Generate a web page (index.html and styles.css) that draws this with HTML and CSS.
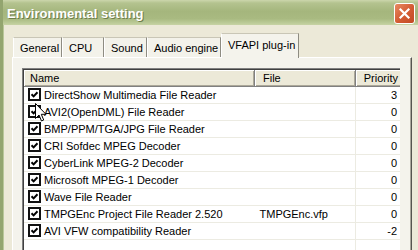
FILE: index.html
```html
<!DOCTYPE html>
<html>
<head>
    <title>Environmental setting</title>
    <link rel="stylesheet" href="styles.css">
</head>
<body>
    <div class="window">
        <div class="titlebar">
            <span class="title">Environmental setting</span>
            <div class="close-btn">
                <svg width="19" height="19" viewBox="0 0 19 19">
                    <path d="M5.5 5.5 L13.5 13.5 M13.5 5.5 L5.5 13.5" stroke="#ffffff" stroke-width="2.2" stroke-linecap="square"></path>
                </svg>
            </div>
        </div>

        <div class="content">
            <div class="tabs">
                <div class="tab tab-general">General</div>
                <div class="tab tab-cpu">CPU</div>
                <div class="tab tab-sound">Sound</div>
                <div class="tab tab-audio">Audio engine</div>
                <div class="tab tab-vfapi active">VFAPI plug-in</div>
            </div>

            <div class="panel">
                <div class="list">
                    <table>
                        <thead>
                            <tr>
                                <th class="col-name">Name</th>
                                <th class="col-file">File</th>
                                <th class="col-prio">Priority</th>
                            </tr>
                        </thead>
                        <tbody>
                            <tr><td class="col-name"><span class="check"></span>DirectShow Multimedia File Reader</td><td></td><td class="col-prio">3</td></tr>
                            <tr><td class="col-name"><span class="check"></span>AVI2(OpenDML) File Reader</td><td></td><td class="col-prio">0</td></tr>
                            <tr><td class="col-name"><span class="check"></span>BMP/PPM/TGA/JPG File Reader</td><td></td><td class="col-prio">0</td></tr>
                            <tr><td class="col-name"><span class="check"></span>CRI Sofdec MPEG Decoder</td><td></td><td class="col-prio">0</td></tr>
                            <tr><td class="col-name"><span class="check"></span>CyberLink MPEG-2 Decoder</td><td></td><td class="col-prio">0</td></tr>
                            <tr><td class="col-name"><span class="check"></span>Microsoft MPEG-1 Decoder</td><td></td><td class="col-prio">0</td></tr>
                            <tr><td class="col-name"><span class="check"></span>Wave File Reader</td><td></td><td class="col-prio">0</td></tr>
                            <tr><td class="col-name"><span class="check"></span>TMPGEnc Project File Reader 2.520</td><td>TMPGEnc.vfp</td><td class="col-prio">0</td></tr>
                            <tr><td class="col-name"><span class="check"></span>AVI VFW compatibility Reader</td><td></td><td class="col-prio">-2</td></tr>
                            <tr><td class="col-name"></td><td></td><td class="col-prio"></td></tr>
                        </tbody>
                    </table>

                    <!-- mouse pointer resting on the second row -->
                    <svg class="cursor" width="13" height="20" viewBox="0 0 13 20">
                        <path d="M0.5 0.5 L0.5 15.5 L4 12 L6.5 18 L8.7 17 L6.3 11.3 L11 11.3 Z" fill="#ffffff" stroke="#000000" stroke-width="1"></path>
                    </svg>
                </div>
            </div>
        </div>
    </div>
</body>
</html>
```

FILE: styles.css
```css
html, body {
    margin: 0;
    padding: 0;
}

body {
    width: 418px;
    height: 250px;
    overflow: hidden;
    font-family: "Liberation Sans", Arial, sans-serif;
    font-size: 11px;
    color: #000000;
    background-color: #ece9d8;
}

.window {
    height: 250px;
    display: flex;
    flex-direction: column;
    border-left: 3px solid #93a56f;
    box-shadow: inset 1px 0 #b9c799;
    background-color: #ece9d8;
}

.titlebar {
    height: 25px;
    flex-shrink: 0;
    display: flex;
    align-items: center;
    justify-content: space-between;
    padding: 0 3px 0 4px;
    background: linear-gradient(#ccd6ac 0, #b4c38f 3px, #a5b67d 45%, #a9ba81 75%, #bccb98 92%, #c7d3a5 100%);
}

.title {
    font-size: 13px;
    font-weight: bold;
    color: #ffffff;
    text-shadow: 1px 1px 0 #6e7d4b;
    padding-top: 1px;
}

.close-btn {
    width: 19px;
    height: 19px;
    margin-top: 1px;
    border: 1px solid #ffffff;
    border-radius: 3px;
    background: linear-gradient(135deg, #e78a62, #d35a32 55%, #c24a24);
    display: flex;
}

.content {
    flex: 1;
    min-height: 0;
    display: flex;
    flex-direction: column;
    padding: 8px 6px 0 9px;
}

.tabs {
    display: flex;
    align-items: flex-end;
    flex-shrink: 0;
    padding-left: 1px;
    height: 24px;
    position: relative;
    z-index: 1;
}

.tab {
    height: 20px;
    box-sizing: border-box;
    padding: 4px 0 0 6px;
    background-color: #f3f2ea;
    border-top: 1px solid #c9c6b6;
    border-left: 1px solid #ffffff;
    border-right: 1px solid #8e8c82;
    white-space: nowrap;
}

.tab-general { width: 49px; }
.tab-cpu { width: 42px; }
.tab-sound { width: 43px; }
.tab-audio { width: 74px; }
.tab-vfapi { width: 78px; }

.tab.active {
    height: 25px;
    margin-bottom: -1px;
    padding-top: 5px;
    background-color: #f4f3ec;
}

.panel {
    flex: 1;
    min-height: 0;
    display: flex;
    padding: 10px 11px 0 9px;
    background-color: #f4f3ec;
    border-top: 1px solid #ffffff;
    border-left: 1px solid #ffffff;
    border-right: 1px solid #555550;
    box-shadow: inset -1px 0 #a9a79c;
}

.list {
    flex: 1;
    position: relative;
    overflow: hidden;
    background-color: #ffffff;
    border-top: 1px solid #808080;
    border-left: 1px solid #808080;
    box-shadow: inset 1px 1px #404040;
    padding: 1px 0 0 1px;
}

table {
    border-collapse: collapse;
    table-layout: fixed;
    width: 373px;
}

th {
    height: 16px;
    padding: 0 5px;
    font-weight: normal;
    text-align: left;
    background-color: #ece9d8;
    border-right: 1px solid #808080;
    border-bottom: 1px solid #808080;
    box-shadow: inset 1px 1px #ffffff, inset -1px -1px #aca899;
    line-height: 14px;
}

td {
    height: 16px;
    padding: 0 5px;
    border-right: 1px solid #ecebe2;
    border-bottom: 1px solid #ecebe2;
    white-space: nowrap;
    overflow: hidden;
    line-height: 16px;
    vertical-align: middle;
}

.col-name {
    width: 229px;
}

td.col-name {
    padding-left: 4px;
    padding-right: 0;
    border-right: none;
}

th.col-name {
    width: 219px;
    padding-left: 6px;
}

.col-file {
    width: 87px;
    padding-left: 8px;
}

.col-prio {
    text-align: right;
    padding-right: 5px;
}

th.col-prio {
    width: 37px;
    padding-right: 4px;
}

.check {
    display: inline-block;
    vertical-align: -2px;
    width: 9px;
    height: 9px;
    border: 2px solid #111111;
    margin-right: 3px;
    background: #ffffff url("data:image/svg+xml;utf8,<svg xmlns='http://www.w3.org/2000/svg' width='9' height='9'><polyline points='1.5,4.3 3.6,6.4 7.5,2.2' fill='none' stroke='black' stroke-width='2'/></svg>") no-repeat;
}

.cursor {
    position: absolute;
    left: 12px;
    top: 34px;
}
```
